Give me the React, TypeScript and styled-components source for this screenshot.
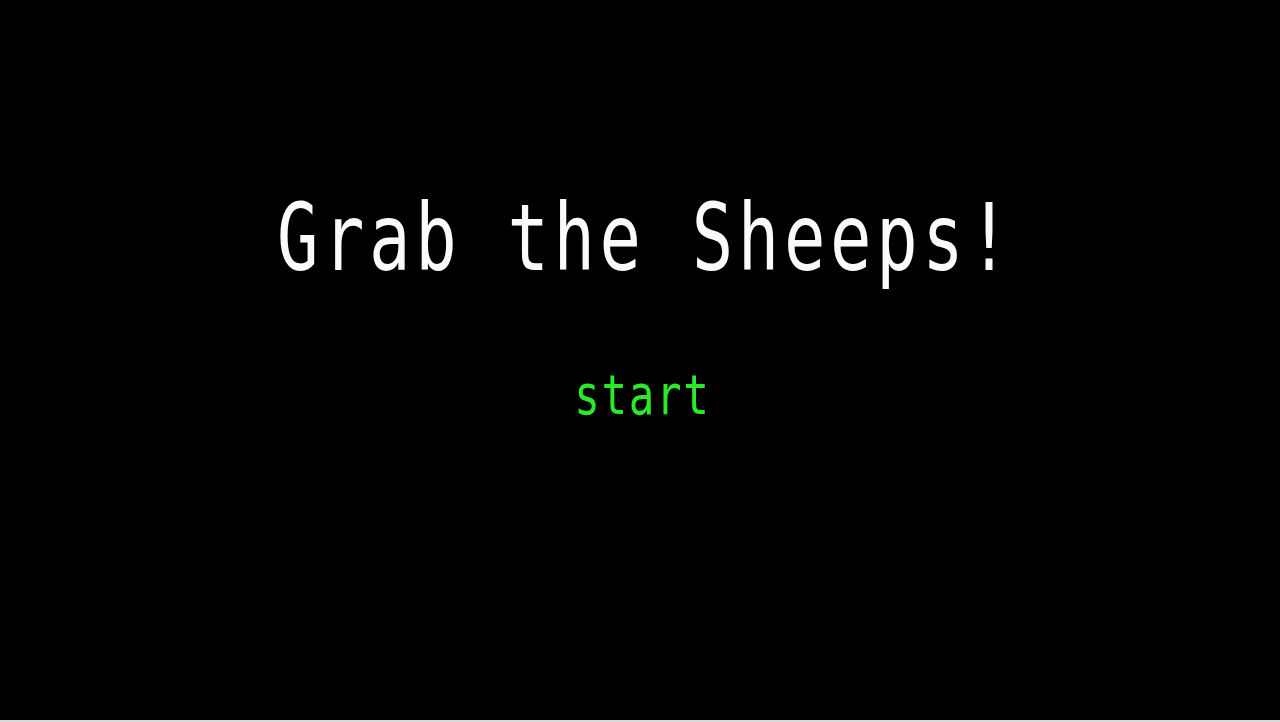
import React from "react";
import styled, { createGlobalStyle } from "styled-components";

const GlobalStyle = createGlobalStyle`
  html, body {
    margin: 0;
    padding: 0;
    background: #000;
  }
  body {
    font-family: "DejaVu Sans Mono", monospace;
  }
`;

const Screen = styled.div`
  width: 1280px;
  height: 722px;
  box-sizing: border-box;
  background-color: #000;
  border-bottom: 2px solid #d9d9d9;
  display: flex;
  flex-direction: column;
  align-items: center;
  padding-top: 192px;
  padding-left: 8px;
  overflow: hidden;
`;

// the game's font is narrower than DejaVu, so squeeze it and open the tracking
const Title = styled.h1`
  margin: 0;
  padding-left: 5px;
  font-family: "DejaVu Sans Mono", monospace;
  font-weight: normal;
  font-size: 93px;
  line-height: 1;
  letter-spacing: 6.3px;
  color: #fafafa;
  white-space: pre;
  transform: scaleX(0.74);
`;

const StartButton = styled.div`
  margin-top: 82px;
  padding-right: 5px;
  font-family: "DejaVu Sans Mono", monospace;
  font-size: 56px;
  line-height: 1;
  letter-spacing: 2.2px;
  color: #2ae82a;
  cursor: pointer;
  transform: scaleX(0.76);
`;

const App = () => {
  return (
    <>
      <GlobalStyle />
      <Screen>
        <Title>Grab the Sheeps!</Title>
        <StartButton>start</StartButton>
      </Screen>
    </>
  );
};

export default App;
